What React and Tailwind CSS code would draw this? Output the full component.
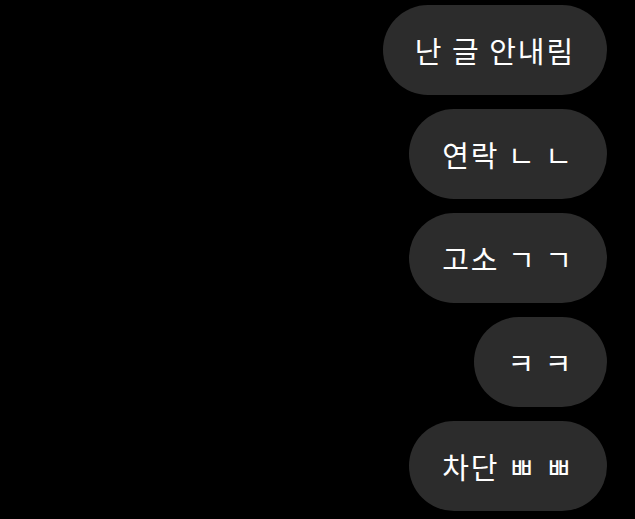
export default function App() {
  const items = [
    { t: "난 글 안내림", w: "w-[224px]" },
    { t: "연락 ㄴ ㄴ", w: "w-[198px]" },
    { t: "고소 ㄱ ㄱ", w: "w-[198px]" },
    { t: "ㅋ ㅋ", w: "w-[133px]" },
    { t: "차단 ㅃ ㅃ", w: "w-[198px]" },
  ];
  return (
    <div className="w-[635px] h-[519px] bg-black overflow-hidden flex flex-col items-end gap-[14px] pt-[5px] pr-[28px]" style={{ fontFamily: '"Noto Sans CJK KR", "Noto Sans", sans-serif' }}>
      {items.map((it, i) => (
        <div key={i} className={`${it.w} h-[90px] shrink-0 rounded-full bg-[#2c2c2c] flex items-center justify-center text-white text-[29px] tracking-[2px] font-normal leading-none whitespace-pre`}>
          {it.t}
        </div>
      ))}
    </div>
  );
}
